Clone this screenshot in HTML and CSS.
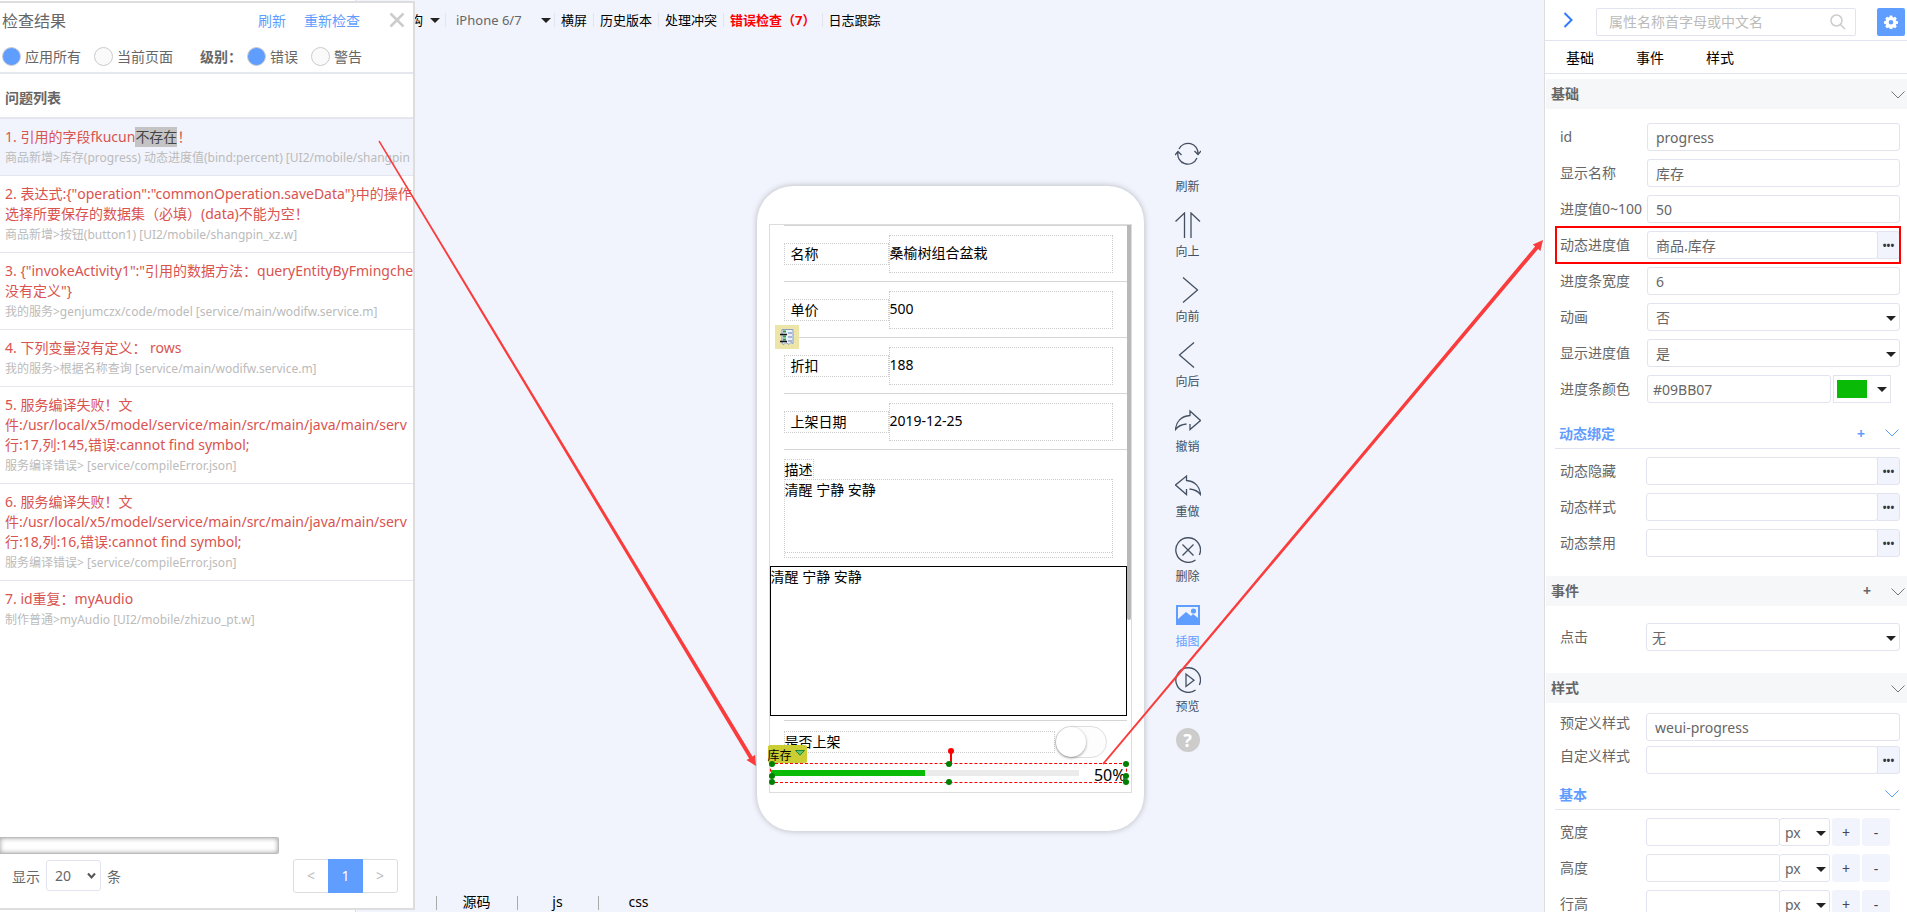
FILE: index.html
```
<!DOCTYPE html>
<html lang="zh-CN">
<head>
  <meta charset="UTF-8">
  <meta name="viewport" content="width=device-width, initial-scale=1.0">
  <title>页面设计器</title>
  <link rel="stylesheet" href="styles.css">
</head>
<body>
  <main class="designer">
    <nav class="toolbar">
      <button class="has-caret">构</button>
      <label class="device"><select aria-label="设备"><option>iPhone 6/7</option></select></label>
      <button>横屏</button>
      <button>历史版本</button>
      <button>处理冲突</button>
      <button class="error">错误检查（7）</button>
      <button>日志跟踪</button>
    </nav>

    <div class="stage">
      <section class="phone">
        <div class="screen">
          <div class="page">
            <div class="cell"><span class="cell-label">名称</span><span class="cell-value">桑榆树组合盆栽</span></div>
            <div class="cell"><span class="cell-label">单价</span><span class="cell-value">500</span></div>
            <div class="cell"><span class="cell-label">折扣</span><span class="cell-value">188</span></div>
            <div class="cell"><span class="cell-label">上架日期</span><span class="cell-value">2019-12-25</span></div>
            <div class="desc">
              <label for="desc">描述</label>
              <div class="desc-box"><textarea id="desc">清醒 宁静 安静</textarea></div>
            </div>
            <textarea class="plain" aria-label="文本">清醒 宁静 安静</textarea>
            <div class="switch-row">
              <label for="onsale">是否上架</label>
              <input type="checkbox" id="onsale" class="switch">
            </div>
            <div class="progress">
              <div class="track"><div class="bar" style="width: 50%"></div></div>
              <span class="percent">50%</span>
              <span class="tag">库存<svg width="10" height="6" viewBox="0 0 10 6"><path d="M.5.5h9L5 5.2z" fill="#5fc46c" stroke="#1d8a3a"/></svg></span>
              <svg class="pin" width="6" height="16" viewBox="0 0 6 16"><path d="M3 3v13" stroke="red" stroke-width="2"/><circle cx="3" cy="3" r="3" fill="red"/></svg>
              <i class="dot tl"></i><i class="dot tc"></i><i class="dot tr"></i>
              <i class="dot ml"></i><i class="dot mr"></i>
              <i class="dot bl"></i><i class="dot bc"></i><i class="dot br"></i>
            </div>
          </div>
          <div class="scrollbar"></div>
          <span class="model-tag">
            <svg width="14" height="16" viewBox="0 0 14 16">
              <path d="M2 .5h11v14l-2-1-2 2-3-2-2 2-2-1z" fill="#eaf1fb" stroke="#8a9fc0"/>
              <path d="M8 4h4M8 8h4M8 12h4" stroke="#5b7fb5"/>
              <path d="M3 2.500h3M3 7.500h3M3 10.500h3" stroke="#2f9e44" stroke-width="2"/>
              <path d="M0 5.500h7M0 12.500h7" stroke="#111" stroke-width="1.300"/>
            </svg>
          </span>
        </div>
      </section>

      <div class="tools">
        <button><svg width="26" height="32" viewBox="0 0 26 32"><path d="M4 8a10 10 0 0 1 19 5M22 17a10 10 0 0 1-19-6M19.500 10l3.500 3.500 3-3.500M0 14l3-3.500L6.500 14"/></svg>刷新</button>
        <button><svg width="26" height="26" viewBox="0 0 26 26"><path d="M.5 9.500l9-8.500v25M16 26V1l9 8.500"/></svg>向上</button>
        <button><svg width="26" height="26" viewBox="0 0 26 26"><path d="M8 .5L22.500 13 8 25.500"/></svg>向前</button>
        <button><svg width="26" height="26" viewBox="0 0 26 26"><path d="M19 .5L4.500 13 19 25.500"/></svg>向后</button>
        <button><svg width="26" height="26" viewBox="0 0 26 26"><path d="M15 17v5.500L25.500 13.500 15 4v4.500C6 9 1 15 .5 22.500 3 19 6.500 17.500 11.500 17"/></svg>撤销</button>
        <button><svg width="26" height="26" viewBox="0 0 26 26"><path d="M11.500 17v5.500L.5 13 11.500 4v4.500C20 9 25 15 25.500 22.500 23 19 19.500 17.500 14.500 17"/></svg>重做</button>
        <button><svg width="26" height="26" viewBox="0 0 26 26"><path d="M20.500 22.900A12.300 12.300 0 1 1 24.400 18M7.500 7.500l11 11M18.500 7.500l-11 11"/></svg>删除</button>
        <button class="active"><svg width="26" height="26" viewBox="0 0 26 26"><path class="fill" fill-rule="evenodd" d="M1 3h24v20H1zM3 5v12l8-7 5 4 2-2 5 4V5z"/><circle class="fill" cx="18.500" cy="9" r="2.600"/></svg>插图</button>
        <button><svg width="26" height="26" viewBox="0 0 26 26"><path d="M20.500 22.900A12.300 12.300 0 1 1 24.400 18M11 7v12.500l8-6.300z"/></svg>预览</button>
        <button class="help" aria-label="帮助">?</button>
      </div>
    </div>

    <nav class="files">
      <a href="#">源码</a>
      <a href="#">js</a>
      <a href="#">css</a>
    </nav>
  </main>

  <aside class="check">
    <header class="check-head">
      <div class="check-title">
        <h2>检查结果</h2>
        <a href="#">刷新</a>
        <a href="#">重新检查</a>
        <button aria-label="关闭"><svg width="16" height="16" viewBox="0 0 16 16"><path d="M1.500 1.500l13 13M14.500 1.500l-13 13"/></svg></button>
      </div>
      <div class="check-filter">
        <label><input type="radio" name="scope" checked>应用所有</label>
        <label><input type="radio" name="scope">当前页面</label>
        <b>级别：</b>
        <label><input type="radio" name="level" checked>错误</label>
        <label><input type="radio" name="level">警告</label>
      </div>
    </header>
    <h3>问题列表</h3>
    <ul class="issues">
      <li class="current"><p>1. 引用的字段fkucun<mark>不存在</mark>！</p><small>商品新增&gt;库存(progress) 动态进度值(bind:percent) [UI2/mobile/shangpin</small></li>
      <li><p>2. 表达式:{"operation":"commonOperation.saveData"}中的操作<br>选择所要保存的数据集（必填）(data)不能为空！</p><small>商品新增&gt;按钮(button1) [UI2/mobile/shangpin_xz.w]</small></li>
      <li><p>3. {"invokeActivity1":"引用的数据方法：queryEntityByFmingche<br>没有定义"}</p><small>我的服务&gt;genjumczx/code/model [service/main/wodifw.service.m]</small></li>
      <li><p>4. 下列变量沒有定义： rows</p><small>我的服务&gt;根据名称查询 [service/main/wodifw.service.m]</small></li>
      <li><p>5. 服务编译失败！文<br>件:/usr/local/x5/model/service/main/src/main/java/main/serv<br>行:17,列:145,错误:cannot find symbol;</p><small>服务编译错误&gt; [service/compileError.json]</small></li>
      <li><p>6. 服务编译失败！文<br>件:/usr/local/x5/model/service/main/src/main/java/main/serv<br>行:18,列:16,错误:cannot find symbol;</p><small>服务编译错误&gt; [service/compileError.json]</small></li>
      <li><p>7. id重复：myAudio</p><small>制作普通&gt;myAudio [UI2/mobile/zhizuo_pt.w]</small></li>
    </ul>
    <div class="hscroll"></div>
    <footer class="pager">
      <label for="size">显示</label>
      <span class="size"><select id="size"><option>20</option></select><svg width="9" height="8" viewBox="0 0 9 8"><path d="M1 1.500l3.500 4L8 1.500" fill="none" stroke="#555" stroke-width="2"/></svg></span>
      <span>条</span>
      <div class="pages">
        <button>&lt;</button><button class="on">1</button><button>&gt;</button>
      </div>
    </footer>
  </aside>

  <aside class="props">
    <header class="props-head">
      <button class="fold" aria-label="收起"><svg width="10" height="16" viewBox="0 0 10 16"><path d="M1.500 1l7 7-7 7"/></svg></button>
      <div class="search">
        <input type="text" placeholder="属性名称首字母或中文名" aria-label="搜索">
        <svg width="16" height="16" viewBox="0 0 16 16"><circle cx="6.500" cy="6.500" r="5.500"/><path d="M10.500 10.500l4.500 4.500"/></svg>
      </div>
      <button class="gear" aria-label="设置"><svg width="14" height="14" viewBox="0 0 14 14"><path fill-rule="evenodd" d="M5.800.5h2.400l.4 1.700 1 .4 1.500-.9 1.700 1.700-.9 1.500.4 1 1.700.4v2.400l-1.700.4-.4 1 .9 1.500-1.700 1.700-1.500-.9-1 .4-.4 1.700H5.800l-.4-1.700-1-.4-1.500.9-1.700-1.700.9-1.500-.4-1L0 8.700V6.300l1.700-.4.4-1-.9-1.500 1.700-1.700 1.500.9 1-.4zM7 4.900a2.300 2.300 0 1 0 0 4.600 2.300 2.300 0 0 0 0-4.600z"/></svg></button>
    </header>
    <nav class="tabs">
      <a href="#">基础</a>
      <a href="#">事件</a>
      <a href="#">样式</a>
    </nav>

    <h3 class="group">基础<svg width="14" height="8" viewBox="0 0 14 8"><path d="M.5.5L7 7 13.500.5"/></svg></h3>
    <div class="fields basic">
      <div class="field"><label for="f-id">id</label><input id="f-id" type="text" value="progress"></div>
      <div class="field"><label for="f-name">显示名称</label><input id="f-name" type="text" value="库存"></div>
      <div class="field"><label for="f-val">进度值0~100</label><input id="f-val" type="text" value="50"></div>
      <div class="field marked"><label for="f-bind">动态进度值</label><div class="combo"><input id="f-bind" type="text" value="商品.库存"><button>•••</button></div></div>
      <div class="field"><label for="f-w">进度条宽度</label><input id="f-w" type="text" value="6"></div>
      <div class="field"><label for="f-anim">动画</label><div class="select"><select id="f-anim"><option>否</option></select></div></div>
      <div class="field"><label for="f-show">显示进度值</label><div class="select"><select id="f-show"><option>是</option></select></div></div>
      <div class="field"><label for="f-color">进度条颜色</label><div class="color"><input id="f-color" type="text" value="#09BB07"><button class="swatch" aria-label="选择颜色"><i></i></button></div></div>
    </div>

    <h4 class="sub">动态绑定<button>+</button><svg width="14" height="8" viewBox="0 0 14 8"><path d="M.5.5L7 7 13.500.5"/></svg></h4>
    <div class="fields">
      <div class="field"><label for="f-hide">动态隐藏</label><div class="combo"><input id="f-hide" type="text"><button>•••</button></div></div>
      <div class="field"><label for="f-cls">动态样式</label><div class="combo"><input id="f-cls" type="text"><button>•••</button></div></div>
      <div class="field"><label for="f-dis">动态禁用</label><div class="combo"><input id="f-dis" type="text"><button>•••</button></div></div>
    </div>

    <h3 class="group event">事件<button>+</button><svg width="14" height="8" viewBox="0 0 14 8"><path d="M.5.5L7 7 13.500.5"/></svg></h3>
    <div class="fields click">
      <div class="field"><label for="f-click">点击</label><div class="select"><select id="f-click"><option>无</option></select></div></div>
    </div>

    <h3 class="group">样式<svg width="14" height="8" viewBox="0 0 14 8"><path d="M.5.5L7 7 13.500.5"/></svg></h3>
    <div class="fields style">
      <div class="field"><label for="f-pre">预定义样式</label><input id="f-pre" type="text" value="weui-progress"></div>
      <div class="field"><label for="f-cus">自定义样式</label><div class="combo"><input id="f-cus" type="text"><button>•••</button></div></div>
    </div>

    <h4 class="sub base">基本<svg width="14" height="8" viewBox="0 0 14 8"><path d="M.5.5L7 7 13.500.5"/></svg></h4>
    <div class="fields">
      <div class="field"><label for="f-width">宽度</label><div class="unit"><input id="f-width" type="text"><div class="select"><select aria-label="宽度单位"><option>px</option></select></div><button>+</button><button>-</button></div></div>
      <div class="field"><label for="f-height">高度</label><div class="unit"><input id="f-height" type="text"><div class="select"><select aria-label="高度单位"><option>px</option></select></div><button>+</button><button>-</button></div></div>
      <div class="field"><label for="f-line">行高</label><div class="unit"><input id="f-line" type="text"><div class="select"><select aria-label="行高单位"><option>px</option></select></div><button>+</button><button>-</button></div></div>
    </div>
  </aside>

  <!-- 标注箭头 -->
  <svg class="arrows" viewBox="0 0 1907 912">
    <path d="M378.400 141.400L379.600 140.600L752.500 756.400L755.100 754.800L756 766L746.500 760L749.100 758.400z"/>
    <path d="M1102.300 763.400L1103.700 764.600L1538.100 249L1540.400 250.900L1543 240L1532.800 244.500L1535.100 246.400z"/>
  </svg>
</body>
</html>
```

FILE: styles.css
```
* {
  box-sizing: border-box;
}

body {
  margin: 0;
  height: 100vh;
  display: flex;
  overflow: hidden;
  font-family: "Noto Sans", "Noto Sans CJK SC", sans-serif;
  font-size: 14px;
  color: #666;
  background: #fff;
}

h2, h3, h4, p, ul {
  margin: 0;
  padding: 0;
}

a {
  color: inherit;
  text-decoration: none;
}

button, input, select, textarea {
  font: inherit;
  color: inherit;
  margin: 0;
  padding: 0;
  border: 0;
  background: none;
  outline: none;
}

select {
  appearance: none;
}

textarea {
  resize: none;
  display: block;
}

/* 设计区 */
.designer {
  flex: 1;
  margin-left: 355px;
  border-left: 1px solid #ddd;
  background: #f1f4fc;
  display: flex;
  flex-direction: column;
  color: #000;
}

.toolbar {
  height: 40px;
  padding-left: 54px;
  display: flex;
  align-items: center;
  font-size: 13px;
}

.toolbar button {
  padding: 0 6px;
  border-left: 1px solid #e2e5ee;
  line-height: 14px;
  white-space: nowrap;
}

.toolbar .has-caret {
  display: flex;
  align-items: center;
  gap: 7px;
  padding: 0 5px 0 0;
  border: 0;
}

.has-caret::after,
.device::after,
.select::after,
.swatch::after {
  content: "";
  border: 5px solid transparent;
  border-top-color: #222;
  border-bottom: 0;
}

.device {
  display: flex;
  align-items: center;
  width: 109px;
  padding: 0 3px 0 10px;
  border-left: 1px solid #e2e5ee;
  color: #666;
}

.device select {
  flex: 1;
  line-height: 14px;
}

.toolbar .error {
  color: #f00;
  font-weight: bold;
}

.stage {
  flex: 1;
  display: grid;
  grid-template-columns: 1fr auto 1fr;
  align-items: start;
  padding-top: 101px;
}

.phone {
  grid-column: 2;
  width: 387px;
  margin-top: 45px;
  padding: 38px 12px;
  background: #fff;
  border-radius: 36px;
  box-shadow: 0 0 6px rgba(0, 0, 0, .25);
}

.screen {
  position: relative;
  display: flex;
  height: 569px;
  border: 1px solid #ddd;
}

.page {
  flex: 1;
  display: flex;
  flex-direction: column;
}

.scrollbar {
  width: 4px;
  height: 395px;
  background: #b8b8b8;
  border-radius: 0 0 2px 2px;
}

.cell {
  display: flex;
  align-items: center;
  height: 56px;
  margin-left: 14px;
  padding-right: 14px;
  border-top: 1px solid #d5d5d5;
}

.cell-label {
  width: 105px;
  padding-left: 6px;
  line-height: 20px;
  border: 1px dotted #ccc;
}

.cell-value {
  flex: 1;
  height: 38px;
  line-height: 34px;
  border: 1px dotted #ccc;
}

.desc {
  margin-left: 14px;
  padding: 9px 14px 0 0;
  border-top: 1px solid #d5d5d5;
}

.desc label {
  display: block;
  width: fit-content;
  margin-bottom: -1px;
  line-height: 19px;
  border: 1px dotted #ccc;
}

.desc-box {
  padding-bottom: 4px;
  border: 1px dotted #ccc;
  border-top: 0;
}

.desc textarea {
  width: 100%;
  height: 74px;
  line-height: 20px;
  border-top: 1px dotted #ccc;
  border-bottom: 1px dotted #ccc;
}

.plain {
  margin-top: 8px;
  height: 150px;
  line-height: 20px;
  border: 1px solid #000;
}

.switch-row {
  display: flex;
  align-items: center;
  margin: 4px 0 0 14px;
  padding: 5px 20px 5px 0;
  border-top: 1px solid #d5d5d5;
}

.switch-row label {
  flex: 1;
  line-height: 20px;
  border: 1px dotted #ccc;
}

.switch {
  appearance: none;
  width: 52px;
  height: 32px;
  border: 1px solid #dfdfdf;
  border-radius: 16px;
  background: #fdfdfd;
}

.switch::before {
  content: "";
  display: block;
  width: 30px;
  height: 30px;
  border-radius: 50%;
  background: #fff;
  box-shadow: 0 1px 3px rgba(0, 0, 0, .4);
}

.progress {
  position: relative;
  display: flex;
  align-items: center;
  gap: 15px;
  height: 20px;
  border: 1px dashed #f00;
  font-size: 16px;
}

.track {
  flex: 1;
  height: 6px;
  background: #ebebeb;
}

.bar {
  height: 6px;
  background: #09bb07;
}

.percent {
  padding-top: 3px;
}

.tag {
  position: absolute;
  left: -3px;
  bottom: 19px;
  display: flex;
  gap: 3px;
  width: 39px;
  height: 18px;
  line-height: 22px;
  font-size: 12px;
  background: #cc3;
  border-radius: 2px;
}

.tag svg {
  flex: none;
  margin-top: 5px;
}

.pin {
  position: absolute;
  left: 50%;
  bottom: 18px;
}

.dot {
  position: absolute;
  width: 6px;
  height: 6px;
  border-radius: 50%;
  background: #008000;
}

.tl, .tc, .tr { top: -3px; }
.ml, .mr { top: 9px; }
.bl, .bc, .br { bottom: -3px; }
.tl, .ml, .bl { left: -2px; }
.tc, .bc { left: calc(50% - 2px); }
.tr, .mr, .br { right: -3px; }

.model-tag {
  position: absolute;
  left: 5px;
  top: 100px;
  width: 24px;
  height: 24px;
  padding: 4px 5px;
  background: #ede4a8;
}

.model-tag svg {
  display: block;
}

.tools {
  width: 28px;
  margin-left: 30px;
  display: flex;
  flex-direction: column;
  align-items: center;
  gap: 16px;
}

.tools button {
  display: flex;
  flex-direction: column;
  align-items: center;
  gap: 5px;
  line-height: 18px;
  font-size: 12px;
  color: #445062;
  white-space: nowrap;
}

.tools svg {
  fill: none;
  stroke: #445062;
  stroke-width: 1.3;
}

.tools .active {
  color: #5f9dff;
}

.tools .fill {
  fill: #5f9dff;
  stroke: none;
}

.tools .help {
  display: block;
  width: 24px;
  height: 24px;
  margin-top: -4px;
  line-height: 24px;
  border-radius: 50%;
  background: #ccc;
  color: #fff;
  font-size: 18px;
  font-weight: bold;
}

.files {
  display: flex;
  height: 16px;
  padding-left: 80px;
  line-height: 11px;
}

.files a {
  width: 81px;
  height: 14px;
  padding-right: 1px;
  border-left: 1px solid #aaa;
  text-align: center;
}

/* 检查结果 */
.check {
  position: absolute;
  left: 0;
  top: 1px;
  bottom: 2px;
  width: 415px;
  display: flex;
  flex-direction: column;
  background: #fff;
  border: solid #ddd;
  border-width: 2px 2px 2px 0;
}

.check-head {
  height: 71px;
  border-bottom: 2px solid #e4e7ed;
}

.check-title {
  display: flex;
  align-items: center;
  height: 33px;
  padding: 0 8px 0 2px;
  color: #5f9dff;
}

.check-title h2 {
  flex: 1;
  font-size: 16px;
  font-weight: normal;
  color: #666;
}

.check-title a {
  margin-left: 18px;
}

.check-title button {
  margin-left: 29px;
}

.check-title svg {
  display: block;
  fill: none;
  stroke: #ccc;
  stroke-width: 2.5;
}

.check-filter {
  display: flex;
  align-items: center;
  height: 40px;
  padding-left: 2px;
}

.check-filter label {
  display: flex;
  align-items: center;
  gap: 4px;
  margin-right: 13px;
}

.check-filter b {
  width: 34px;
  margin-left: 14px;
  margin-right: 13px;
  white-space: nowrap;
}

.check-filter input {
  appearance: none;
  width: 19px;
  height: 19px;
  border: 1px solid #ccc;
  border-radius: 50%;
  background: #fafafa;
}

.check-filter input:checked {
  background: #5f9dff;
}

.check h3 {
  padding: 4px 0 0 5px;
  font-size: 14px;
  line-height: 39px;
  border-bottom: 2px solid #e4e7ed;
}

.issues {
  flex: 1;
  overflow: hidden;
  list-style: none;
  white-space: nowrap;
}

.issues li {
  padding: 8px 0 6px 5px;
  border-bottom: 1px solid #e4e7ed;
}

.issues li:last-child {
  border: 0;
}

.issues .current {
  background: #f1f4fc;
}

.issues p {
  line-height: 20px;
  color: #d9534f;
}

.issues mark {
  display: inline-block;
  background: #c4c4c4;
  color: #444;
}

.issues small {
  display: block;
  font-size: 12px;
  line-height: 22px;
  color: #bbb;
}

.hscroll {
  width: 279px;
  height: 17px;
  border: 1px solid #bbb;
  border-left: 0;
  border-radius: 0 2px 2px 0;
  box-shadow: inset 0 0 5px rgba(0, 0, 0, .4);
}

.pager {
  display: flex;
  align-items: center;
  gap: 6px;
  height: 54px;
  padding: 0 15px 11px 12px;
}

.size {
  position: relative;
}

.size select {
  width: 55px;
  height: 31px;
  padding-left: 8px;
  border: 1px solid #e1e4ee;
  border-radius: 3px;
}

.size svg {
  position: absolute;
  right: 5px;
  top: 12px;
}

.pages {
  display: flex;
  margin-left: auto;
  border: 1px solid #ddd;
  border-radius: 3px;
}

.pages button {
  width: 34px;
  height: 32px;
  color: #bbb;
}

.pages .on {
  width: 35px;
  height: 34px;
  margin: -1px 0;
  background: #5f9dff;
  color: #fff;
}

/* 属性面板 */
.props {
  width: 363px;
  height: 100vh;
  overflow: hidden;
  background: #fff;
  border-left: 1px solid #ddd;
}

.props svg {
  fill: none;
}

.props-head {
  display: flex;
  align-items: center;
  height: 41px;
  padding: 3px 2px 0 18px;
  border-bottom: 1px solid #e1e4ee;
}

.fold {
  width: 33px;
  height: 26px;
  text-align: left;
}

.fold svg {
  stroke: #2f7bff;
  stroke-width: 2;
}

.search {
  flex: 1;
  display: flex;
  align-items: center;
  height: 28px;
  padding: 0 9px 0 12px;
  border: 1px solid #e1e4ee;
  border-radius: 2px;
}

.search input {
  flex: 1;
}

.search input::placeholder {
  color: #bbb;
}

.search svg {
  stroke: #ccc;
  stroke-width: 1.5;
}

.gear {
  width: 28px;
  height: 28px;
  margin-left: 21px;
  border-radius: 2px;
  background: #5f9dff;
}

.gear svg {
  display: block;
  margin: auto;
  fill: #fff;
}

.tabs {
  display: flex;
  gap: 42px;
  height: 33px;
  padding-left: 21px;
  line-height: 34px;
  border-bottom: 1px solid #e1e4ee;
  color: #000;
}

.group {
  display: flex;
  align-items: center;
  justify-content: space-between;
  height: 30px;
  margin: 5px 0 0 1px;
  padding: 0 2px 2px 5px;
  background: #f6f7f9;
  font-size: 14px;
}

.group svg {
  margin-top: 3px;
  stroke: #777;
}

.group button,
.sub button {
  margin-left: auto;
  margin-right: 20px;
}

.fields {
  display: flex;
  flex-direction: column;
  gap: 8px;
  padding: 8px 7px 0 15px;
}

.basic {
  padding-top: 14px;
}

.field {
  position: relative;
  display: grid;
  grid-template-columns: 86px 1fr;
  align-items: center;
  height: 28px;
  white-space: nowrap;
}

.basic .field {
  grid-template-columns: 87px 1fr;
}

.field label {
  line-height: 26px;
}

.field input,
.field select {
  width: 100%;
  min-width: 0;
  height: 28px;
  padding-left: 8px;
  border: 1px solid #e1e4ee;
  border-radius: 3px;
}

.field .color input,
.click .field select,
.unit .field select {
  padding-left: 5px;
}

/* 选中的属性 */
.marked::before {
  content: "";
  position: absolute;
  inset: -5px -1px -5px -5px;
  border: 2px solid #f00;
}

.combo,
.color,
.unit {
  display: flex;
}

.combo button {
  flex: none;
  width: 23px;
  height: 28px;
  margin-left: -1px;
  border: 1px solid #e1e4ee;
  border-radius: 0 3px 3px 0;
  background: #f1f4fc;
  color: #334;
  font-size: 10px;
  font-weight: bold;
}

.select {
  position: relative;
}

.select::after {
  position: absolute;
  right: 4px;
  top: 13px;
}

.color {
  gap: 2px;
  padding-right: 9px;
}

.swatch {
  flex: none;
  display: flex;
  align-items: center;
  gap: 10px;
  width: 58px;
  height: 28px;
  padding-left: 3px;
  border: 1px solid #e1e4ee;
}

.swatch i {
  width: 30px;
  height: 18px;
  background: #09bb07;
}

.sub {
  display: flex;
  align-items: center;
  height: 31px;
  margin: 15px 7px 0 10px;
  padding: 0 1px 0 4px;
  border-bottom: 1px solid #e1e4ee;
  color: #5f9dff;
  font-size: 14px;
}

.sub svg {
  stroke: #5f9dff;
}

.event {
  margin-top: 19px;
}

.click {
  padding-top: 17px;
  padding-bottom: 17px;
}

.style {
  gap: 5px;
  padding-top: 10px;
}

.style label {
  padding-bottom: 8px;
  line-height: 18px;
}

.base {
  margin-top: 5px;
  justify-content: space-between;
}

.unit {
  padding-right: 10px;
  gap: 2px;
}

.unit input {
  flex: 1;
}

.unit .select {
  width: 51px;
  margin-left: -3px;
}

.unit select {
  padding-left: 5px;
}

.unit button {
  flex: none;
  width: 28px;
  height: 28px;
  border-radius: 3px;
  background: #f1f4fc;
  color: #445;
}

.arrows {
  position: absolute;
  inset: 0;
  width: 100%;
  pointer-events: none;
  fill: #fb3c3c;
}
```
